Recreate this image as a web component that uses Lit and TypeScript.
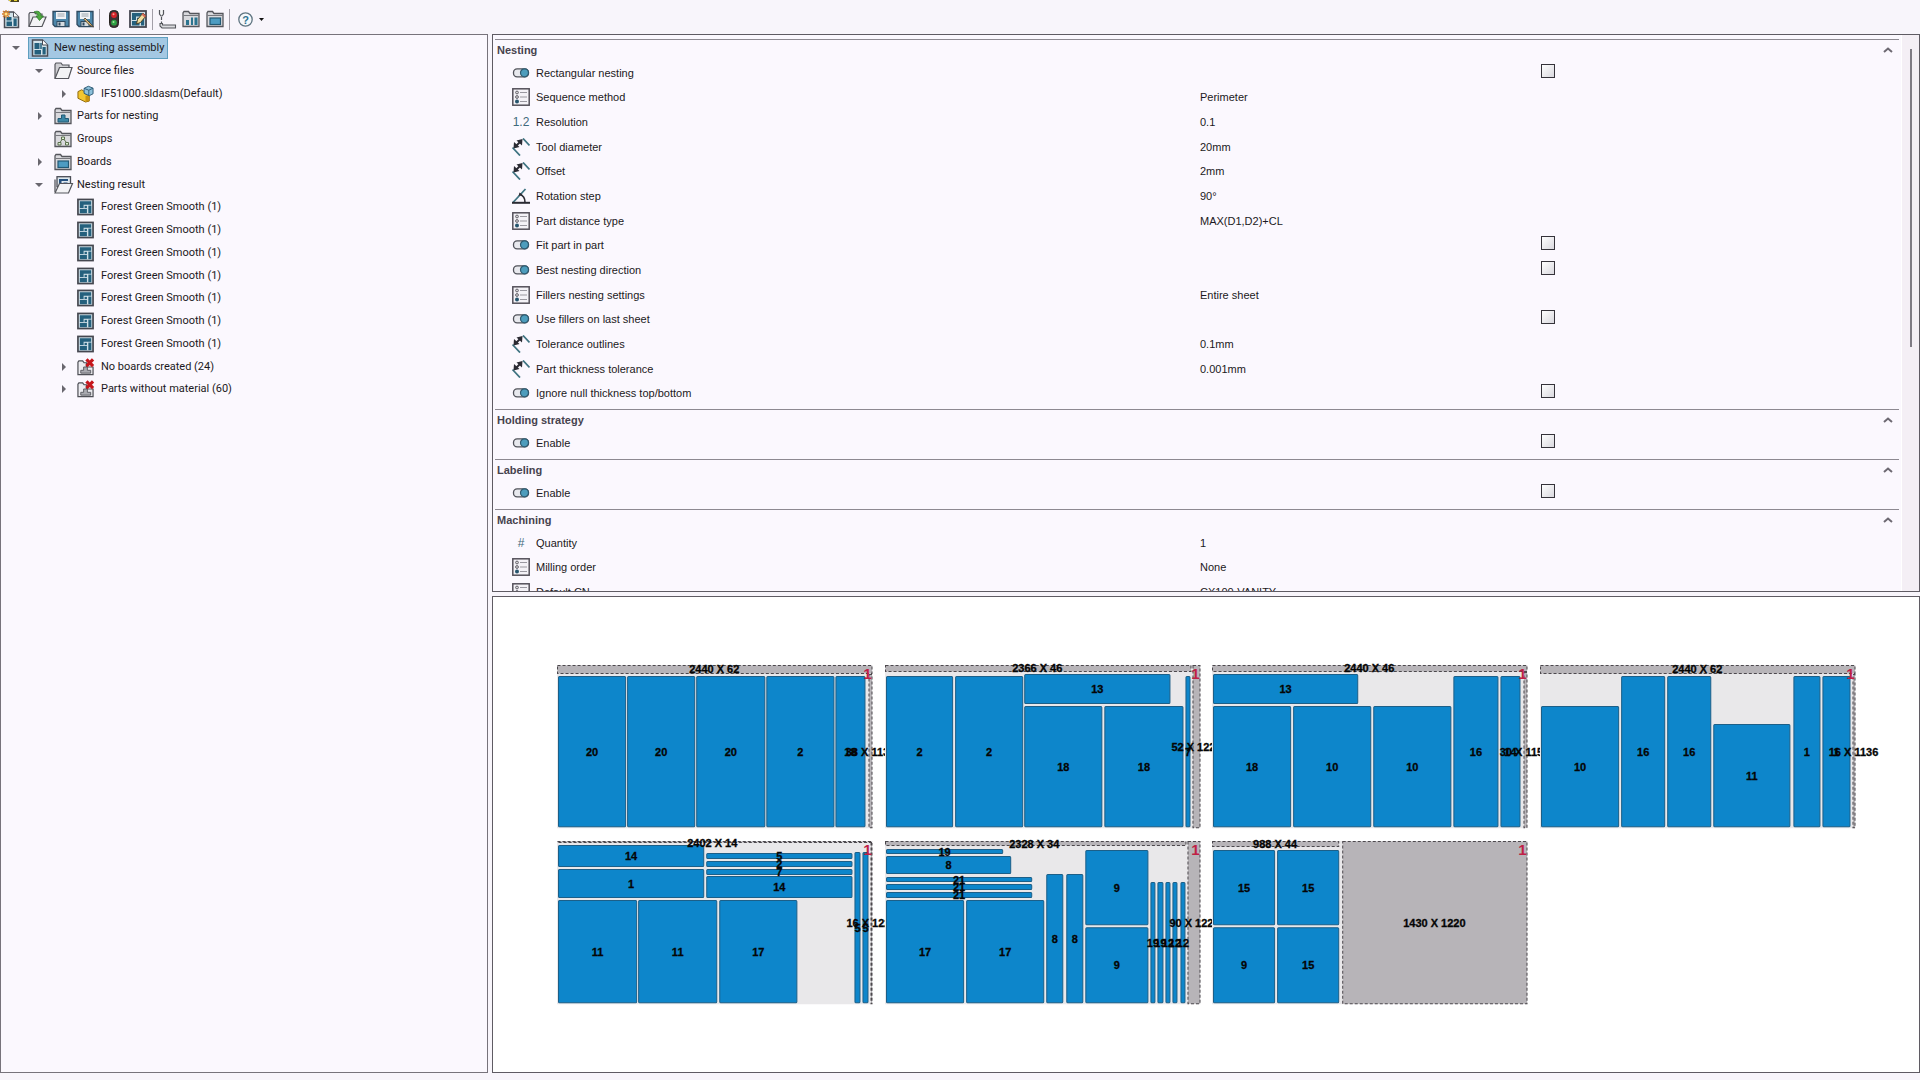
import { LitElement, html, svg, css, nothing, type TemplateResult } from "lit";
import { customElement, property, state } from "lit/decorators.js";
import { classMap } from "lit/directives/class-map.js";

/* ---------- icons ---------- */

const boardGlyph = svg`
  <rect x="1" y="1" width="16" height="16" fill="#cfdfe7" stroke="#454750" stroke-width="1.8"/>
  <path d="M3 3h12v3.500H7v3.500H3z" fill="#24607d"/>
  <rect x="3" y="11" width="7.500" height="4.500" fill="#24607d"/>
  <rect x="8" y="7.800" width="2.500" height="2.300" fill="#24607d"/>
  <rect x="12" y="7.500" width="3.200" height="8" fill="#24607d"/>`;

const folderBack = svg`
  <path d="M1 16.500V3l1-1.500h4.500L8 3.500h9v13z" fill="#d9d9dd" stroke="#55565c" stroke-width="1.300"/>
  <path d="M1.500 5.500h15.500" stroke="#77787e"/>`;

const cross = svg`<path d="M10 1l7 7M17 1l-7 7" stroke="#c5161c" stroke-width="3.400"/>`;

const wasteFolder = svg`
  <path d="M1 17V4l1-1.500h4L7.500 4.500H10V9h7v8z" fill="#ececf0" stroke="#4f5057" stroke-width="1.300"/>
  <path d="M4 15.500v-3h3v-3.500h4v3.500h3.500v3z" fill="#a9aab0" stroke="#5b5c63"/>${cross}`;

const floppy = svg`
  <path d="M1 1.500h16v15H3l-2-2z" fill="#4d87ab" stroke="#2f4a60" stroke-width="1.300"/>
  <rect x="4" y="2" width="10" height="7" fill="#f1f3f6"/>
  <path d="M5.500 4h7M5.500 6h7" stroke="#9da6ae"/>
  <rect x="5" y="11.500" width="8" height="5" fill="#d5dbe0" stroke="#2f4a60"/>
  <rect x="6.500" y="12.500" width="2" height="3" fill="#2f4a60"/>`;

const ICONS: Record<string, TemplateResult> = {
  board: boardGlyph,
  assembly: svg`
    <path d="M1.500 1h10l5 5v11h-15z" fill="#d3e3ea" stroke="#4a4c55" stroke-width="1.500"/>
    <path d="M11.500 1v5h5" fill="#fff" stroke="#4a4c55"/>
    <path d="M3.500 4h5v6h-5zM3.500 11h6.500v4.500H3.500zM11.500 8h3.200v7.500h-3.200z" fill="#24607d"/>
    <path d="M10 4v6" stroke="#24607d" stroke-width="1.500"/>`,
  newFile: svg`
    <path d="M2.500 2h9l5 5v10.500h-14z" fill="#d3e3ea" stroke="#4a4c55" stroke-width="1.500"/>
    <path d="M11.500 2v5h5" fill="#fff" stroke="#4a4c55"/>
    <path d="M4.500 7h5v3.500h-5zM4.500 11.500h5.500v4.500H4.500zM11.500 8.500h3.200v7.500h-3.200z" fill="#24607d"/>
    <path d="M4 0v8M0 4h8M1 1l6 6M7 1l-6 6" stroke="#d9822b" stroke-width="1.300"/>
    <circle cx="4" cy="4" r="1.500" fill="#ffe28a"/>`,
  openFile: svg`
    <path d="M1 16V4l1-1.500h4.500L8 4h6v3" fill="#e7e7ea" stroke="#55565c" stroke-width="1.200"/>
    <path d="M1 16.500L5 7h13l-4 9.500z" fill="#f3f3f5" stroke="#55565c" stroke-width="1.200"/>
    <path d="M6 2c4-2 7 0 7 4h2.500L11.500 10.500 8 6h2c0-2-1-3-4-4z" fill="#4faa3f" stroke="#2b7a28" stroke-width=".8"/>`,
  save: floppy,
  saveAs: svg`${floppy}
    <path d="M9 8l6 6 2.500 3-3.500-1.500-6-6z" fill="#e6c27a" stroke="#4a4034" stroke-width=".9"/>`,
  traffic: svg`
    <rect x="4.500" y=".5" width="9" height="17" rx="4" fill="#3d3335" stroke="#25211f"/>
    <circle cx="9" cy="5" r="2.900" fill="#d8232a"/><circle cx="8.500" cy="4.300" r="1" fill="#f79a8f"/>
    <circle cx="9" cy="12.700" r="2.900" fill="#2ea043"/><circle cx="8.500" cy="12" r="1" fill="#a3e29a"/>`,
  nestEdit: svg`${boardGlyph}
    <path d="M14 3l3 3-5.500 6.500-4 1.500 1-4.500z" fill="#f3dfa0" stroke="#4b4228"/>
    <path d="M14 3l3 3-1.500 1.500-3-3z" fill="#d66a5a"/>`,
  drillTool: svg`
    <path d="M1.500 0v4l1.500 2h1l1.500-2V0" fill="#f5f5f7" stroke="#55565c" stroke-width="1.200"/>
    <path d="M3.500 7v3M3.500 11.500v2" stroke="#55565c" stroke-width="1.200"/>
    <path d="M2 13.500h2.500v1.500h13v3H4l-2-2z" fill="#dcdce0" stroke="#55565c" stroke-width="1.100"/>`,
  folderParts: svg`${folderBack}
    <path d="M4 10h3v5H4zM9 7.500h2V15H9zM12.500 7.500h3V15h-3z" fill="#2b7490"/>`,
  folderBoard: svg`${folderBack}
    <rect x="4" y="8" width="10.500" height="6.500" fill="#4d9cc2" stroke="#235a75" stroke-width="1.200"/>`,
  folderPart: svg`${folderBack}
    <path d="M4 15v-3.500h3.500V8h3.500v3.500h3.500V15z" fill="#3c87a6" stroke="#235a75"/>`,
  folderGroup: svg`${folderBack}
    <path d="M7.500 7h3v2.500h-3zM4 12.500h3V15H4zM11.500 12.500h3V15h-3z" fill="#dff0d8" stroke="#5a6f4c"/>
    <path d="M8 9.500l-2 3M10 9.500l2.500 3" stroke="#5a6f4c"/>`,
  openFolder: svg`
    <path d="M1 16V2.500L2 1h5l1.500 2H15v3" fill="#cfcfd3" stroke="#55565c" stroke-width="1.200"/>
    <path d="M1 16.500L5.500 5.500H18l-3.500 11z" fill="#f3f3f5" stroke="#55565c" stroke-width="1.200"/>`,
  openBoards: svg`
    <rect x="3" y=".7" width="13.500" height="10" fill="#dfe9ee" stroke="#4a4c55" stroke-width="1.300"/>
    <path d="M5 3h9v2H7.500v3H5zM9.500 6.500h4v2h-4z" fill="#24507d"/>
    <path d="M1 16V3.500" stroke="#55565c" stroke-width="1.300"/>
    <path d="M1 17L5.500 7.500H18.500L14.500 17z" fill="#f3f3f5" stroke="#55565c" stroke-width="1.200"/>`,
  sldasm: svg`
    <path d="M1 6.500l4-2 3 2v2l5 2v6L9 17.500l-8-4z" fill="#f2c62f" stroke="#8a6508"/>
    <path d="M9 11l4-1.500v7L9 17.500z" fill="#c8920f"/>
    <path d="M7.500 3L12 .8l5 2v6l-4 2-5.500-2.500z" fill="#8cc0da" stroke="#2d5a75"/>
    <path d="M7.500 3l5 2v5.500M12.500 5L17 2.800" stroke="#2d5a75" fill="none"/>`,
  noParts: wasteFolder,
  toggle: svg`
    <rect x="1.500" y="4.800" width="15" height="8" rx="3.600" fill="#e8e9ee" stroke="#50525a" stroke-width="1.300"/>
    <circle cx="12.500" cy="8.800" r="4" fill="#4d9dbd" stroke="#2f5a70" stroke-width="1.200"/>`,
  list: svg`
    <rect x=".8" y=".8" width="16.400" height="16.400" fill="#f4f2f7" stroke="#54505a" stroke-width="1.500"/>
    <path d="M8 4.500h7M8 9h7M8 13.500h7" stroke="#9a98a0" stroke-width="1.200"/>
    <circle cx="5" cy="4.500" r="1.400" fill="#ddd" stroke="#66636c"/>
    <circle cx="5" cy="9" r="1.400" fill="#ddd" stroke="#66636c"/>
    <circle cx="5" cy="13.500" r="2" fill="#26556d"/>`,
  length: svg`
    <path d="M11 .5l6.500 7M.5 9.500l7.500 8" stroke="#3f7482" stroke-width="1.800"/>
    <path d="M3 9L9 3" stroke="#2b2b33" stroke-width="2"/>
    <path d="M4.500 2.500l6-1.500-.5 6.500zM2 4l-.5 6.500 6-1.500z" fill="#2b2b33"/>`,
  angle: svg`
    <path d="M1 15.500L13.500 2" stroke="#3f7482" stroke-width="1.800"/>
    <path d="M0 15.800h18" stroke="#2b2b33" stroke-width="2"/>
    <path d="M8 7.500c3.500 1 5 4 5 8" stroke="#2b2b33" stroke-width="1.600" fill="none"/>
    <path d="M6.500 9l1-3.500 3 2z" fill="#2b2b33"/>`,
};

const icon = (name: string) =>
  html`<svg class="icon" viewBox="0 0 18 18" fill="none" aria-hidden="true">${ICONS[name]}</svg>`;

/* ---------- data ---------- */

interface TreeNode { text: string; icon: string; level: number; arrow?: "open" | "closed"; }

const TREE: TreeNode[] = [
  { text: "New nesting assembly", icon: "assembly", level: 0, arrow: "open" },
  { text: "Source files", icon: "openFolder", level: 1, arrow: "open" },
  { text: "IF51000.sldasm(Default)", icon: "sldasm", level: 2, arrow: "closed" },
  { text: "Parts for nesting", icon: "folderPart", level: 1, arrow: "closed" },
  { text: "Groups", icon: "folderGroup", level: 1 },
  { text: "Boards", icon: "folderBoard", level: 1, arrow: "closed" },
  { text: "Nesting result", icon: "openBoards", level: 1, arrow: "open" },
  ...Array.from({ length: 7 }, (): TreeNode => ({ text: "Forest Green Smooth (1)", icon: "board", level: 2 })),
  { text: "No boards created (24)", icon: "noParts", level: 2, arrow: "closed" },
  { text: "Parts without material (60)", icon: "noParts", level: 2, arrow: "closed" },
];

/* A row without a value is a tick box. */
interface Row { label: string; icon: string; value?: string; }
interface Section { title: string; rows: Row[]; }

const SECTIONS: Section[] = [
  { title: "Nesting", rows: [
    { label: "Rectangular nesting", icon: "toggle" },
    { label: "Sequence method", icon: "list", value: "Perimeter" },
    { label: "Resolution", icon: "decimal", value: "0.1" },
    { label: "Tool diameter", icon: "length", value: "20mm" },
    { label: "Offset", icon: "length", value: "2mm" },
    { label: "Rotation step", icon: "angle", value: "90°" },
    { label: "Part distance type", icon: "list", value: "MAX(D1,D2)+CL" },
    { label: "Fit part in part", icon: "toggle" },
    { label: "Best nesting direction", icon: "toggle" },
    { label: "Fillers nesting settings", icon: "list", value: "Entire sheet" },
    { label: "Use fillers on last sheet", icon: "toggle" },
    { label: "Tolerance outlines", icon: "length", value: "0.1mm" },
    { label: "Part thickness tolerance", icon: "length", value: "0.001mm" },
    { label: "Ignore null thickness top/bottom", icon: "toggle" },
  ] },
  { title: "Holding strategy", rows: [{ label: "Enable", icon: "toggle" }] },
  { title: "Labeling", rows: [{ label: "Enable", icon: "toggle" }] },
  { title: "Machining", rows: [
    { label: "Quantity", icon: "number", value: "1" },
    { label: "Milling order", icon: "list", value: "None" },
    { label: "Default CN", icon: "list", value: "CX100-VANITY" },
  ] },
];

/* x1, y1, x2, y2 in sheet units, then the text in the middle. */
type Part = [number, number, number, number, string];
/* x1, y1, x2, y2, text, text centre x, text centre y. */
type Waste = [number, number, number, number, string, number, number];
interface Sheet { parts: Part[]; waste: Waste[]; }

const SHEETS: Sheet[] = [
  { parts: [
      [1, 11, 69, 162, "20"], [70, 11, 138, 162, "20"], [139, 11, 208, 162, "20"],
      [209, 11, 277, 162, "2"], [278, 11, 308, 162, "18"]],
    waste: [[0, 0, 315, 9, "2440 X 62", 157, 4], [311, 9, 315, 163, "38 X 1136", 313, 87]] },
  { parts: [
      [1, 11, 68, 162, "2"], [70, 11, 138, 162, "2"], [139, 9, 285, 39, "13"],
      [139, 41, 217, 162, "18"], [219, 41, 298, 162, "18"], [300, 11, 305, 162, "7"]],
    waste: [[0, 0, 306, 7, "2366 X 46", 152, 3], [307, 0, 315, 163, "52 X 1220", 311, 82]] },
  { parts: [
      [1, 9, 146, 39, "13"], [1, 41, 79, 162, "18"], [81, 41, 159, 162, "10"],
      [161, 41, 239, 162, "10"], [241, 11, 286, 162, "16"], [288, 11, 308, 162, "14"]],
    waste: [[0, 0, 315, 7, "2440 X 46", 157, 3], [311, 7, 315, 163, "30 X 1156", 312, 87]] },
  { parts: [
      [1, 41, 79, 162, "10"], [81, 11, 125, 162, "16"], [127, 11, 171, 162, "16"],
      [173, 59, 250, 162, "11"], [253, 11, 280, 162, "1"], [282, 11, 310, 162, "1"]],
    waste: [[0, 0, 315, 9, "2440 X 62", 157, 4], [312, 9, 315, 163, "16 X 1136", 313, 87]] },
  { parts: [
      [1, 4, 147, 26, "14"], [1, 28, 147, 57, "1"], [1, 59, 80, 162, "11"],
      [81, 59, 160, 162, "11"], [162, 59, 240, 162, "17"], [149, 12, 295, 18, "5"],
      [149, 20, 295, 26, "2"], [149, 28, 295, 34, "7"], [149, 35, 295, 57, "14"],
      [297, 11, 303, 162, "5"], [305, 11, 311, 162, "5"]],
    waste: [[0, 0, 315, 2, "2402 X 14", 155, 2], [313, 2, 315, 163, "16 X 1220", 314, 82]] },
  { parts: [
      [1, 8, 118, 13, "19"], [1, 15, 126, 33, "8"], [1, 36, 147, 41, "21"],
      [1, 43, 147, 49, "21"], [1, 51, 147, 57, "21"], [1, 59, 79, 162, "17"],
      [81, 59, 159, 162, "17"], [161, 33, 178, 162, "8"], [181, 33, 198, 162, "8"],
      [200, 9, 263, 84, "9"], [200, 86, 263, 162, "9"], [265, 41, 270, 162, "19"],
      [272, 41, 278, 162, "19"], [280, 41, 285, 162, "12"], [287, 41, 292, 162, "12"],
      [295, 41, 300, 162, "12"]],
    waste: [[0, 0, 301, 5, "2328 X 34", 149, 3], [302, 0, 315, 163, "90 X 1220", 309, 82]] },
  { parts: [
      [1, 9, 63, 84, "15"], [65, 9, 127, 84, "15"], [1, 86, 63, 162, "9"], [65, 86, 127, 162, "15"]],
    waste: [[0, 0, 127, 6, "988 X 44", 63, 3], [130, 0, 315, 163, "1430 X 1220", 222, 82]] },
];

/* ---------- elements ---------- */

@customElement("tool-bar")
class ToolBar extends LitElement {
  static styles = css`
    :host { display: block; }
    .bar { display: flex; align-items: center; height: 24px; padding: 0 2px; }
    .tool { display: flex; align-items: center; justify-content: center; width: 24px; height: 24px; padding: 0; margin: 0 -2px 0 2px; border: 0; background: none; }
    .tool:first-child { margin-left: -3px; margin-right: 0; }
    .icon { width: 18px; height: 18px; overflow: visible; }
    .sep { width: 1px; height: 21px; margin: 0 0 0 4px; background: #a39fa8; }
    .help { display: flex; align-items: center; gap: 6px; height: 24px; margin: 0 0 0 8px; padding: 0; border: 0; background: none; }
    .round { width: 15px; height: 15px; }
    .drop { width: 5px; height: 3px; }
    .mark { font: bold 11px "Liberation Sans", sans-serif; fill: #2e7391; }
  `;
  private tool(name: string, label: string) {
    return html`<button class="tool" aria-label=${label}>${icon(name)}</button>`;
  }
  render() {
    return html`<div class="bar" role="toolbar">
      ${this.tool("newFile", "New")}${this.tool("openFile", "Open")}
      ${this.tool("save", "Save")}${this.tool("saveAs", "Save as")}
      <span class="sep"></span>
      ${this.tool("traffic", "Calculate")}${this.tool("nestEdit", "Edit nesting")}
      <span class="sep"></span>
      ${this.tool("drillTool", "Tools")}${this.tool("folderParts", "Parts")}${this.tool("folderBoard", "Boards")}
      <span class="sep"></span>
      <button class="help" aria-label="Help">
        <svg class="round" viewBox="0 0 15 15"><circle cx="7.500" cy="7.500" r="6.700" fill="#f5f8fb" stroke="#5f7480" stroke-width="1.300"/>
          <text class="mark" x="7.500" y="11.500" text-anchor="middle">?</text></svg>
        <svg class="drop" viewBox="0 0 5 3"><path d="M0 0h5L2.500 3z" fill="#111"/></svg>
      </button>
    </div>`;
  }
}

@customElement("nesting-tree")
class NestingTree extends LitElement {
  @state() private selected = 0;
  static styles = css`
    :host { display: block; font-family: Roboto, "Liberation Sans", sans-serif; }
    .tree { margin: 0; padding: 1px 0 0 3px; list-style: none; }
    .row { display: flex; align-items: center; height: 23px; }
    .row:nth-child(4n) { height: 22px; }
    .level1 { padding-left: 23px; }
    .level2 { padding-left: 47px; }
    .arrow { display: flex; align-items: center; justify-content: center; width: 24px; }
    .glyph { width: 8px; height: 8px; }
    .node { display: flex; align-items: center; gap: 5px; height: 22px; padding: 0 3px 0 2px; border: 1px solid transparent; background: none; font: inherit; color: inherit; white-space: nowrap; }
    .level2 .node { gap: 7px; padding-left: 1px; }
    .on { background: #a4c8e3; border-color: #5f9fc0; }
    .icon { width: 18px; height: 18px; overflow: visible; }
    .level2 .icon { width: 17px; }
  `;
  render() {
    return html`<ul class="tree">${TREE.map((n, i) => html`
      <li class="row level${n.level}">
        <span class="arrow">${n.arrow
          ? html`<svg class="glyph" viewBox="0 0 8 8"><path d=${n.arrow === "open" ? "M0 2h8L4 6z" : "M3 0v8l4-4z"} fill="#69676e"/></svg>`
          : nothing}</span>
        <button class=${classMap({ node: true, on: i === this.selected })} @click=${() => (this.selected = i)}>
          ${icon(n.icon)}<span>${n.text}</span>
        </button>
      </li>`)}</ul>`;
  }
}

@customElement("property-list")
class PropertyList extends LitElement {
  static styles = css`
    :host { display: grid; grid-template-columns: minmax(0, 1fr) 17px; overflow: hidden; }
    .body { min-width: 0; padding: 4px 2px 0 2px; overflow: hidden; border-right: 1px solid #fff; }
    .section { border-top: 1px solid #8d8991; padding-bottom: 4px; }
    .head { display: flex; align-items: center; justify-content: space-between; height: 20px; padding: 0 6px 0 2px; }
    .title { margin: 0; font-size: 11px; font-weight: bold; color: #47434e; }
    .fold { display: flex; padding: 0; border: 0; background: none; }
    .chevron { width: 10px; height: 6px; }
    .row { display: grid; grid-template-columns: minmax(0, 1fr) minmax(0, 1fr); align-items: center; height: 25px; }
    .row:nth-child(3n + 2) { height: 24px; }
    .label { display: flex; align-items: center; gap: 6px; padding-left: 17px; }
    .value { padding-left: 3px; }
    .icon { width: 18px; height: 18px; flex: none; }
    .sign { width: 18px; text-align: center; font-family: "Liberation Sans", sans-serif; font-size: 12px; color: #3f6a7c; }
    .check { display: flex; justify-content: center; }
    .box { appearance: none; width: 14px; height: 14px; margin: 0 0 4px; border: 1px solid #35333a; background: linear-gradient(135deg, #fff, #d9d8de); }
    .box:checked { background: #2e7391; }
    .track { display: flex; justify-content: center; padding: 14px 0 0; background: #f4eff5; }
    .thumb { width: 2px; height: 55%; background: #7f7b84; }
  `;
  private sign(name: string) {
    if (name === "decimal") return html`<span class="sign">1.2</span>`;
    if (name === "number") return html`<span class="sign">#</span>`;
    return icon(name);
  }
  render() {
    return html`<div class="body">${SECTIONS.map((s, si) => html`
      <section class="section">
        <header class="head"><h2 class="title">${s.title}</h2>
          <button class="fold" aria-label="Collapse"><svg class="chevron" viewBox="0 0 10 6"><path d="M1 5l4-3.500L9 5" fill="none" stroke="#6d6972" stroke-width="2"/></svg></button>
        </header>
        <div>${s.rows.map((r, ri) => {
          const id = `p${si}-${ri}`;
          return html`<div class="row">
            <label class="label" for=${id}>${this.sign(r.icon)}<span>${r.label}</span></label>
            ${r.value === undefined
              ? html`<span class="check"><input class="box" id=${id} type="checkbox"></span>`
              : html`<output class="value" id=${id}>${r.value}</output>`}
          </div>`;
        })}</div>
      </section>`)}</div>
      <div class="track"><div class="thumb"></div></div>`;
  }
}

@customElement("board-sheet")
class BoardSheet extends LitElement {
  @property({ attribute: false }) sheet!: Sheet;
  static styles = css`
    :host { display: block; }
    .sheet { display: block; width: 100%; overflow: visible; }
    .base { fill: #e9e8ea; }
    .part { fill: #0d86cb; stroke: #1c5f88; stroke-width: 1; }
    .waste { fill: #b7b4b8; stroke: #4c484d; stroke-width: 1; stroke-dasharray: 3 2; }
    .text { font-size: 11px; font-weight: bold; text-anchor: middle; fill: #050505; stroke: #050505; stroke-width: .3; }
    .count { font-size: 15px; font-weight: bold; text-anchor: middle; fill: #bf2045; }
  `;
  render() {
    const { parts, waste } = this.sheet;
    return html`<svg class="sheet" viewBox="0 0 315 163">
      <rect class="base" width="315" height="163"/>
      ${waste.map(([x, y, r, b]) => svg`<rect class="waste" x=${x + 0.5} y=${y + 0.5} width=${r - x - 1} height=${b - y - 1}/>`)}
      ${parts.map(([x, y, r, b]) => svg`<rect class="part" rx="1" x=${x + 0.5} y=${y + 0.5} width=${r - x - 1} height=${b - y - 1}/>`)}
      <text class="count" x="310" y="14">1</text>
      ${parts.map(([x, y, r, b, t]) => svg`<text class="text" x=${(x + r) / 2} y=${(y + b) / 2 + 4}>${t}</text>`)}
      ${waste.map(([, , , , t, x, y]) => svg`<text class="text" x=${x} y=${y + 4}>${t}</text>`)}
    </svg>`;
  }
}

@customElement("app-root")
class AppRoot extends LitElement {
  static styles = css`
    :host { display: grid; grid-template-rows: auto minmax(0, 1fr); height: 100vh; box-sizing: border-box; padding-bottom: 7px; background: #f8f5fb; font: 11px/16px "Liberation Sans", sans-serif; color: #1b1922; overflow: hidden; }
    .top { padding: 0 0 3px; }
    .caption { display: flex; height: 3px; margin-bottom: 4px; padding-left: 8px; overflow: hidden; }
    .logo { width: 11px; height: 2px; }
    .main { display: grid; grid-template-columns: 488fr 1428fr; gap: 4px; min-height: 0; }
    .side { border: 1px solid #77737b; background: #fbf8fe; overflow: hidden; }
    .work { display: grid; grid-template-rows: 558fr 477fr; gap: 4px; min-height: 0; }
    .props { border: 1px solid #5f5b63; background: #fbf8fe; min-height: 0; }
    .canvas { border: 1px solid #5f5b63; background: #fff; overflow: hidden; }
    .sheets { display: grid; grid-template-columns: repeat(4, minmax(0, 1fr)); gap: 13px 12px; padding: 68px 64px 0 64px; font-family: "Liberation Sans", sans-serif; }
  `;
  render() {
    return html`
      <header class="top">
        <div class="caption"><svg class="logo" viewBox="0 0 11 2"><path d="M0 0h11v2H3z" fill="#4c4420"/><path d="M1 0h2v1h-2zM6 0h3v1h-3z" fill="#e5cf2d"/></svg></div>
        <tool-bar></tool-bar>
      </header>
      <main class="main">
        <nesting-tree class="side"></nesting-tree>
        <div class="work">
          <property-list class="props"></property-list>
          <div class="canvas"><div class="sheets">
            ${SHEETS.map((s) => html`<board-sheet .sheet=${s}></board-sheet>`)}
          </div></div>
        </div>
      </main>`;
  }
}
